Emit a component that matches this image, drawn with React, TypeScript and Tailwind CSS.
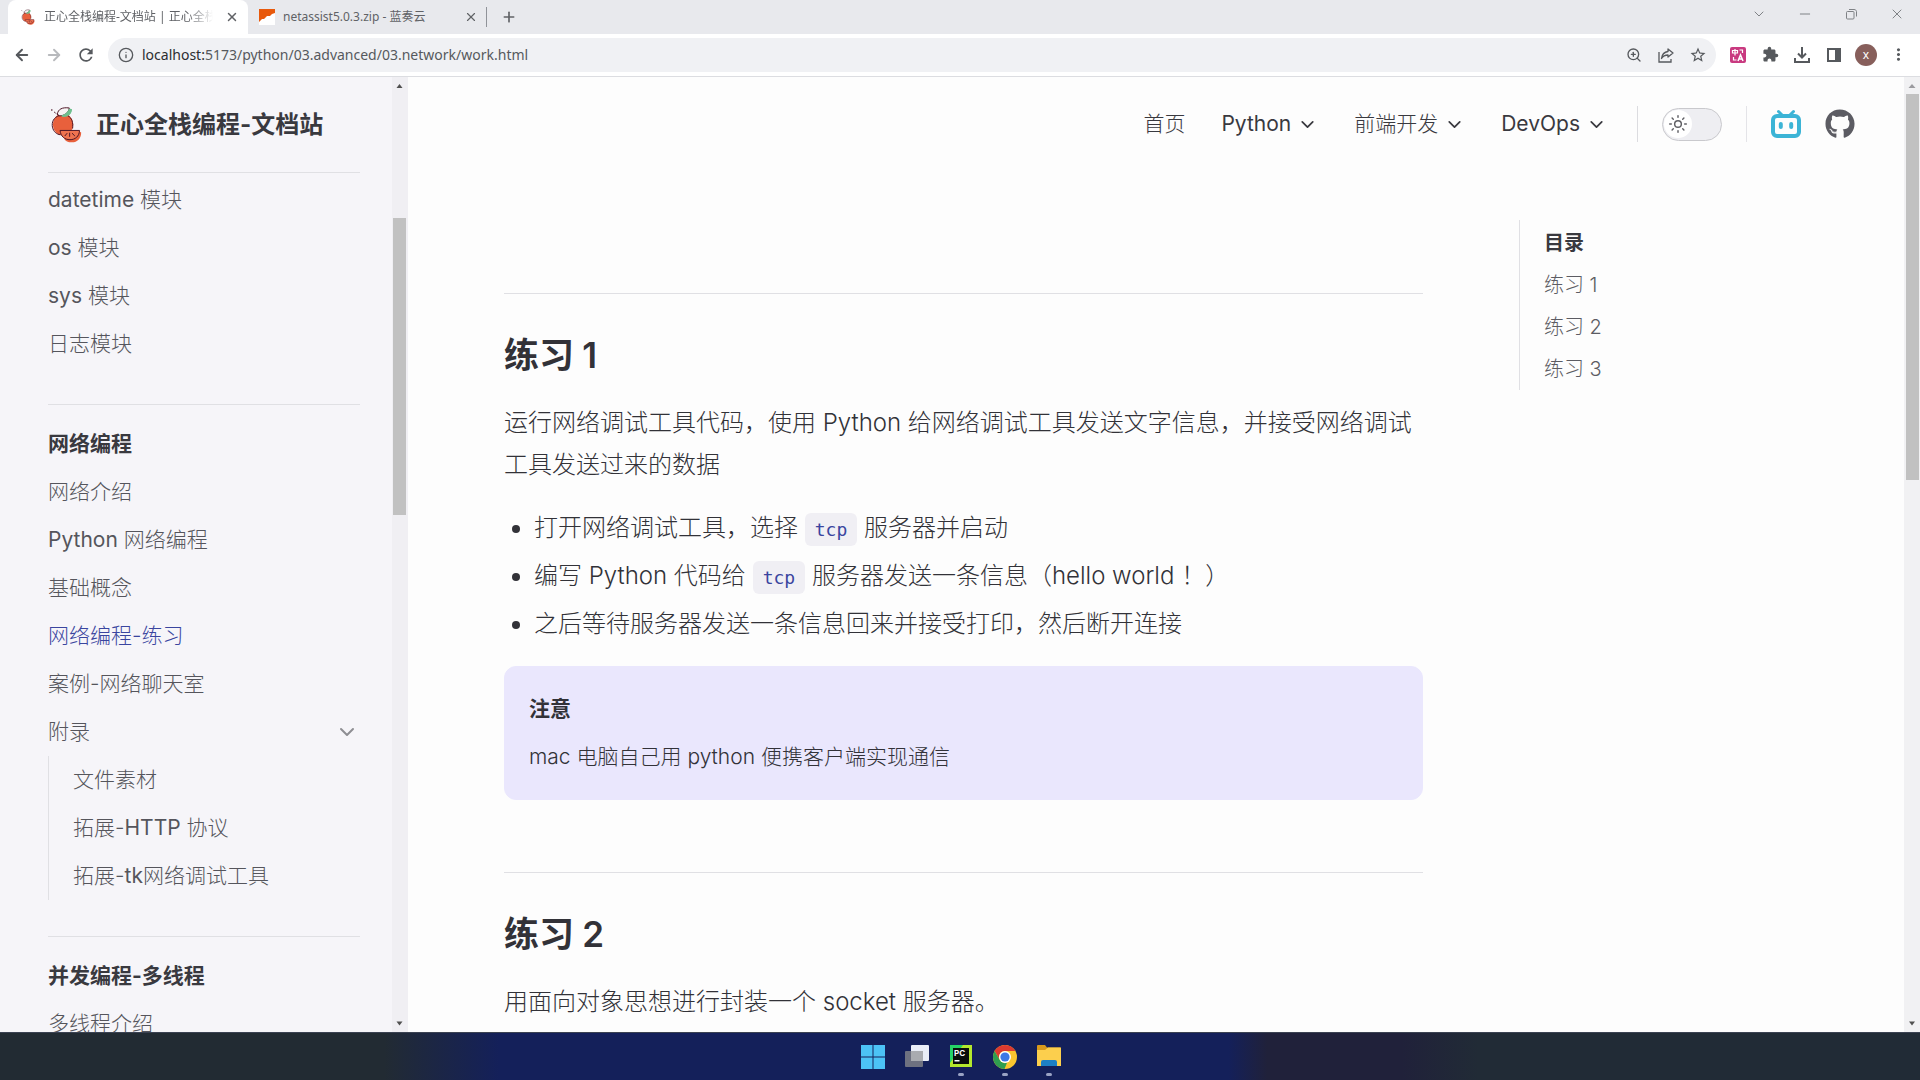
import { ReactNode } from "react";
import { ArrowLeft, ArrowRight, ChevronDown, Info, Minus, Plus, Sun, X, ZoomIn } from "lucide-react";
import { FaGithub } from "react-icons/fa";
import { MdExtension, MdMoreVert, MdRefresh, MdStarBorder } from "react-icons/md";

interface SidebarItem {
  label: string;
  active?: boolean;
  children?: string[];
}

interface SidebarGroup {
  title?: string;
  items: SidebarItem[];
}

const SIDEBAR: SidebarGroup[] = [
  {
    items: [{ label: "datetime 模块" }, { label: "os 模块" }, { label: "sys 模块" }, { label: "日志模块" }],
  },
  {
    title: "网络编程",
    items: [
      { label: "网络介绍" },
      { label: "Python 网络编程" },
      { label: "基础概念" },
      { label: "网络编程-练习", active: true },
      { label: "案例-网络聊天室" },
      { label: "附录", children: ["文件素材", "拓展-HTTP 协议", "拓展-tk网络调试工具"] },
    ],
  },
  {
    title: "并发编程-多线程",
    items: [{ label: "多线程介绍" }],
  },
];

const NAV = [
  { label: "首页", menu: false },
  { label: "Python", menu: true },
  { label: "前端开发", menu: true },
  { label: "DevOps", menu: true },
];

const OUTLINE = ["练习 1", "练习 2", "练习 3"];

// Latin runs get a heavier weight than the thin CJK glyphs around them
function Mixed({ text }: { text: string }) {
  return (
    <>
      {text.split(/([A-Za-z0-9]+)/).map((part, i) =>
        i % 2 ? (
          <span key={i} className="font-normal">
            {part}
          </span>
        ) : (
          part
        )
      )}
    </>
  );
}

function FruitLogo({ className }: { className: string }) {
  return (
    <svg viewBox="0 0 96 112" className={className} fill="none" aria-hidden="true">
      <ellipse cx="39" cy="56" rx="31" ry="33" fill="#e8603c" />
      <path d="M30 24C36 12 48 8 66 10C64 26 54 34 36 32Z" fill="#6fc08f" />
      <path d="M22 24C24 10 36 3 58 6C56 20 44 30 27 30Z" fill="#f7f3f4" stroke="#4d1626" strokeWidth="3" />
      <path d="M34 28C44 26 54 18 57 8C64 8 66 10 66 10C64 26 54 34 36 32Z" fill="#6fc08f" />
      <path d="M26 29L12 18" stroke="#4d1626" strokeWidth="3" strokeDasharray="8 4" />
      <circle cx="5" cy="12" r="2.5" fill="#4d1626" />
      <path d="M28 29C10 34 4 50 7 64C10 78 20 86 31 87M54 30C66 36 70 50 68 68" stroke="#4d1626" strokeWidth="3" />
      <path d="M94 80C94 98 82 110 66 110C54 110 46 106 42 98L90 78Z" fill="#e8603c" />
      <path d="M30 74H89C88 92 76 102 60 102C44 102 32 92 30 74Z" fill="#ef7350" stroke="#4d1626" strokeWidth="3" />
      <path d="M59 82V92M51 83L45 90M67 83L74 90" stroke="#4d1626" strokeWidth="3" strokeLinecap="round" />
    </svg>
  );
}

function BilibiliIcon() {
  return (
    <svg viewBox="0 0 30 30" className="size-[30px]" fill="none" stroke="#3cb4d6" strokeLinecap="round" aria-hidden="true">
      <path d="M7.5 2.5L11 6M22.5 2.5L19 6" strokeWidth="3" />
      <rect x="2" y="7" width="26" height="20" rx="4" strokeWidth="4" />
      <path d="M9.8 15V18M20.2 15V18" strokeWidth="4" />
    </svg>
  );
}

function ChromeIcon() {
  return (
    <svg viewBox="0 0 24 24" className="size-6" aria-hidden="true">
      <circle cx="12" cy="12" r="12" fill="#fbc62f" />
      <path d="M12 0A12 12 0 0 1 22.4 6H12A6 6 0 0 0 6.8 15L1.6 6A12 12 0 0 1 12 0Z" fill="#dc3a30" />
      <path d="M1.6 6L6.8 15A6 6 0 0 0 14 17.7L11.5 24A12 12 0 0 1 1.6 6Z" fill="#2f9e50" />
      <circle cx="12" cy="12" r="6" fill="#fff" />
      <circle cx="12" cy="12" r="4.6" fill="#3c78e6" />
    </svg>
  );
}

function TabStrip() {
  return (
    <div className="flex h-[34px] shrink-0 items-stretch bg-[#e8e9ed] pl-2 text-[#606266]">
      <div className="flex w-60 items-center rounded-t-lg bg-white pr-[9px] pl-3">
        <FruitLogo className="h-4 w-4 shrink-0" />
        <span className="ml-2 flex-1 overflow-hidden mask-r-from-85% text-xs leading-4 whitespace-nowrap">
          正心全栈编程-文档站 | 正心全栈
        </span>
        <button aria-label="关闭标签页" className="ml-3">
          <X className="size-3.5" strokeWidth={2.5} />
        </button>
      </div>
      <div className="flex w-[238px] items-center pr-[8px] pl-[11px]">
        <svg viewBox="0 0 16 16" className="size-4 shrink-0" aria-hidden="true">
          <rect width="16" height="16" fill="#fff" />
          <path d="M0 0H16V4L13 5L11 7L8 7L5 10L3 10L0 13Z" fill="#e8590c" />
        </svg>
        <span className="ml-2 flex-1 truncate text-xs leading-4">netassist5.0.3.zip - 蓝奏云</span>
        <button aria-label="关闭标签页">
          <X className="size-3.5" strokeWidth={2} />
        </button>
      </div>
      <span className="my-[7px] w-px bg-[#909399]" />
      <button aria-label="新标签页" className="ml-3.5">
        <Plus className="size-4" strokeWidth={2.5} />
      </button>
      <div className="ml-auto flex items-center gap-[30px] pr-[15px] pb-[6px] text-[#7f8286]">
        <button aria-label="搜索标签页">
          <ChevronDown className="size-4" strokeWidth={1.5} />
        </button>
        <button aria-label="最小化">
          <Minus className="size-4" strokeWidth={1.5} />
        </button>
        <button aria-label="还原">
          <svg viewBox="0 0 16 16" className="size-4" fill="none" stroke="currentColor" aria-hidden="true">
            <rect x="3.5" y="5.5" width="7.5" height="7.5" rx="1" />
            <path d="M6 3.5H11C12.5 3.5 13.5 4.5 13.5 5.5V10.5" />
          </svg>
        </button>
        <button aria-label="关闭">
          <X className="size-4" strokeWidth={1.5} />
        </button>
      </div>
    </div>
  );
}

function ToolButton({ label, children }: { label: string; children: ReactNode }) {
  return (
    <button aria-label={label} className="flex w-8 items-center justify-center">
      {children}
    </button>
  );
}

function Toolbar() {
  return (
    <div className="flex h-[43px] shrink-0 items-center border-b border-[#dcdde1] bg-white px-[6px] pb-px text-[#56595d]">
      <ToolButton label="后退">
        <ArrowLeft className="size-[18px]" strokeWidth={2.5} />
      </ToolButton>
      <ToolButton label="前进">
        <ArrowRight className="size-[18px] text-[#b8babd]" strokeWidth={2.5} />
      </ToolButton>
      <ToolButton label="刷新">
        <MdRefresh className="size-5" />
      </ToolButton>
      <div className="ml-[6px] flex h-[34px] flex-1 items-center rounded-full bg-[#f0f1f4] pr-[2px] pl-[10px] text-sm leading-5">
        <Info className="size-4 shrink-0" />
        <label htmlFor="url" className="ml-2 text-[#2b2d30]">
          localhost:
        </label>
        <input
          id="url"
          className="min-w-0 flex-1 bg-transparent outline-none"
          defaultValue="5173/python/03.advanced/03.network/work.html"
        />
        <ToolButton label="缩放">
          <ZoomIn className="size-4" />
        </ToolButton>
        <ToolButton label="分享">
          <svg viewBox="0 0 16 16" className="size-4" fill="none" stroke="currentColor" strokeWidth="1.3" aria-hidden="true">
            <path d="M1 5V15H13V12" />
            <path d="M10 2L15 6L10 10V8C7 8 5 9 3.500 11.500C4 7.500 6 5 10 4.500Z" strokeLinejoin="round" />
          </svg>
        </ToolButton>
        <ToolButton label="收藏">
          <MdStarBorder className="size-[18px]" />
        </ToolButton>
      </div>
      <div className="ml-[6px] flex items-center">
        <ToolButton label="翻译">
          <svg viewBox="0 0 16 16" className="size-4" aria-hidden="true">
            <rect width="16" height="16" rx="2" fill="#c93a80" />
            <path d="M2.500 3.500H7.500V6H2.500ZM5 2V8.500" fill="none" stroke="#fff" strokeWidth="1.200" />
            <path d="M9.500 3H12.500V6M3.500 10V13H6.500" fill="none" stroke="#fff" strokeWidth="1.200" />
            <path d="M8 14L10.500 8L13 14M9 12H12" fill="none" stroke="#fff" strokeWidth="1.500" />
          </svg>
        </ToolButton>
        <ToolButton label="扩展程序">
          <MdExtension className="size-[17px]" />
        </ToolButton>
        <ToolButton label="下载">
          <svg viewBox="0 0 16 16" className="size-4" fill="none" stroke="currentColor" strokeWidth="2" aria-hidden="true">
            <path d="M8 0V10M4 6.500L8 10.500L12 6.500M1 11V15H15V11" />
          </svg>
        </ToolButton>
        <ToolButton label="侧边栏">
          <svg viewBox="0 0 14 14" className="size-3.5" aria-hidden="true">
            <rect x="1" y="1" width="12" height="12" fill="none" stroke="currentColor" strokeWidth="2" />
            <rect x="8" y="1" width="5" height="12" fill="currentColor" />
          </svg>
        </ToolButton>
        <ToolButton label="用户">
          <span className="flex size-[22px] items-center justify-center rounded-full bg-[#875f5b] text-xs leading-4 text-white">
            x
          </span>
        </ToolButton>
        <ToolButton label="更多">
          <MdMoreVert className="size-[19px]" />
        </ToolButton>
      </div>
    </div>
  );
}

function Sidebar() {
  return (
    <aside className="flex w-[408px] shrink-0 bg-[#f6f5f9]">
      <div className="min-w-0 flex-1 pr-8 pl-12">
        <a href="#" className="flex h-24 items-center gap-[14px] border-b border-[#e0e0e4] pl-0.5">
          <FruitLogo className="h-[37px] w-8" />
          <span className="text-2xl leading-9 font-bold text-[#39393f]">正心全栈编程-文档站</span>
        </a>
        <nav className="pt-[3px] text-[21px] leading-9 font-light text-[#55555c]">
          {SIDEBAR.map((group, i) => (
            <section key={i} className={group.title ? "border-t border-[#e0e0e4] pt-[15px] pb-9" : "pb-9"}>
              {group.title && <h2 className="py-[6px] font-bold text-[#39393f]">{group.title}</h2>}
              {group.items.map((item) => (
                <div key={item.label}>
                  <a
                    href="#"
                    className={`flex items-center justify-between py-[6px] ${item.active ? "text-[#3a459f]" : ""}`}
                  >
                    <span>
                      <Mixed text={item.label} />
                    </span>
                    {item.children && <ChevronDown className="mr-px size-6 text-[#8e8e93]" />}
                  </a>
                  {item.children && (
                    <div className="border-l border-[#e0e0e4] pl-6">
                      {item.children.map((child) => (
                        <a key={child} href="#" className="block py-[6px]">
                          <Mixed text={child} />
                        </a>
                      ))}
                    </div>
                  )}
                </div>
              ))}
            </section>
          ))}
        </nav>
      </div>
      <div className="flex w-4 flex-col items-start bg-[#f0eff3] pl-px">
        <svg viewBox="0 0 15 17" className="h-[17px] w-[15px]" aria-hidden="true">
          <path d="M3.500 11L6.500 7L9.500 11Z" fill="#505050" />
        </svg>
        <div className="mt-[124px] h-[297px] w-[13px] bg-[#c1c1c1]" />
        <svg viewBox="0 0 15 17" className="mt-auto h-[17px] w-[15px]" aria-hidden="true">
          <path d="M3.500 6.500L6.500 10.500L9.500 6.500Z" fill="#505050" />
        </svg>
      </div>
    </aside>
  );
}

function Header() {
  return (
    <header className="flex h-[94px] items-center justify-end pr-[49px] text-[21px] leading-9 text-[#39393f]">
      <nav className="flex">
        {NAV.map((item) =>
          item.menu ? (
            <button key={item.label} className="flex items-center gap-[6px] px-[18px] font-light">
              <span>
                <Mixed text={item.label} />
              </span>
              <ChevronDown className="size-[21px]" />
            </button>
          ) : (
            <a key={item.label} href="#" className="px-[18px] font-light">
              {item.label}
            </a>
          )
        )}
      </nav>
      <span className="mr-6 ml-3 h-9 w-px bg-[#dcdce0]" />
      <button
        role="switch"
        aria-checked="false"
        aria-label="切换深色模式"
        className="flex h-[33px] w-[60px] items-center rounded-full border border-[#c9c9cd] bg-[#eeeef2] p-px"
      >
        <span className="flex size-7 items-center justify-center rounded-full bg-white text-[#606065]">
          <Sun className="size-5" strokeWidth={1.75} />
        </span>
      </button>
      <span className="mx-6 h-9 w-px bg-[#e4e4e8]" />
      <a href="#" aria-label="Bilibili">
        <BilibiliIcon />
      </a>
      <a href="#" aria-label="GitHub" className="ml-6 text-[#5c5c63]">
        <FaGithub className="size-[30px]" />
      </a>
    </header>
  );
}

function Code({ children }: { children: ReactNode }) {
  return (
    <code className="rounded-md bg-[#f0eff4] px-[10px] py-[6px] font-['DejaVu_Sans_Mono',monospace] text-lg leading-5 font-normal text-[#3a459f]">
      {children}
    </code>
  );
}

function SectionTitle({ children }: { children: ReactNode }) {
  return <h2 className="border-t border-[#e0e0e4] pt-9 text-[35px] leading-[50px] font-bold">{children}</h2>;
}

function Article() {
  return (
    <article className="min-w-0 flex-1 pt-[122px] text-2xl leading-[42px] font-light text-[#323238]">
      <SectionTitle>
        练习 <span className="font-semibold">1</span>
      </SectionTitle>
      <p className="mt-[22px]">
        运行网络调试工具代码，使用 Python 给网络调试工具发送文字信息，并接受网络调试工具发送过来的数据
      </p>
      <ul className="mt-[21px] list-disc space-y-[6px] pl-[30px]">
        <li>
          打开网络调试工具，选择 <Code>tcp</Code> 服务器并启动
        </li>
        <li>
          编写 Python 代码给 <Code>tcp</Code> 服务器发送一条信息（hello world ！）
        </li>
        <li>之后等待服务器发送一条信息回来并接受打印，然后断开连接</li>
      </ul>
      <div className="mt-[21px] rounded-xl border border-[#eae7fd] bg-[#eae7fd] p-6 text-[21px] leading-9">
        <p className="font-bold">注意</p>
        <p className="mt-3">mac 电脑自己用 python 便携客户端实现通信</p>
      </div>
      <div className="mt-[72px]">
        <SectionTitle>
          练习 <span className="font-semibold">2</span>
        </SectionTitle>
        <p className="mt-[22px]">用面向对象思想进行封装一个 socket 服务器。</p>
      </div>
    </article>
  );
}

function RunningMark() {
  return <span className="h-[3px] w-[6px] rounded-full bg-[#9aa3c4]" />;
}

function Taskbar() {
  return (
    <footer className="flex h-12 shrink-0 items-start justify-center gap-5 border-t border-[#3b4252] bg-[linear-gradient(to_right,#222b33_20%,#14205a_26%,#14205a_64%,#20213a_66%,#20213a_73%,#212b36_77%)] pt-3 pl-0.5">
      <button aria-label="开始">
        <svg viewBox="0 0 24 24" className="size-6" fill="#4cc2f5" aria-hidden="true">
          <path d="M0 0H11.500V11.500H0ZM12.500 0H24V11.500H12.500ZM0 12.500H11.500V24H0ZM12.500 12.500H24V24H12.500Z" />
        </svg>
      </button>
      <button aria-label="任务视图">
        <svg viewBox="0 0 24 24" className="size-6" aria-hidden="true">
          <rect x="6" y="0" width="18" height="16" rx="1" fill="#e9edf7" />
          <rect x="0" y="6" width="18" height="16" rx="1" fill="#7e8087" fillOpacity="0.85" />
          <rect x="6" y="6" width="12" height="10" fill="#a9abb0" />
        </svg>
      </button>
      <button aria-label="PyCharm" className="flex flex-col items-center gap-1">
        <svg viewBox="0 0 24 24" className="size-6" aria-hidden="true">
          <rect x="1" y="0" width="22" height="22" fill="#b4e82d" />
          <path d="M1 0H14L1 18Z" fill="#25d366" />
          <rect x="4" y="3" width="16" height="16" fill="#0a0f0c" />
          <text x="5" y="11" fontSize="8" fontWeight="700" fill="#fff">
            PC
          </text>
          <rect x="5.500" y="15" width="5" height="1.500" fill="#fff" />
        </svg>
        <RunningMark />
      </button>
      <button aria-label="Chrome" className="flex flex-col items-center gap-1">
        <ChromeIcon />
        <RunningMark />
      </button>
      <button aria-label="文件资源管理器" className="flex flex-col items-center gap-1">
        <svg viewBox="0 0 24 24" className="size-6" aria-hidden="true">
          <path d="M0 1Q0 0 1 0H8L10 2.500H24V20H0Z" fill="#d99a1c" />
          <path d="M0 5H8L11 2.500H23Q24 2.500 24 3.500V21H0Z" fill="#fccf4d" />
          <path d="M4 21V17Q4 15 6 15H18Q20 15 20 17V21Z" fill="#1d7fc4" />
        </svg>
        <RunningMark />
      </button>
    </footer>
  );
}

export default function App() {
  return (
    <div className="flex h-screen flex-col overflow-hidden bg-[#fdfdfd] font-['Inter','Noto_Sans_CJK_SC',sans-serif]">
      <div className="font-['Noto_Sans','Noto_Sans_CJK_SC',sans-serif]">
        <TabStrip />
        <Toolbar />
      </div>
      <div className="flex min-h-0 flex-1 overflow-hidden">
        <Sidebar />
        <main className="min-w-0 flex-1">
          <Header />
          <div className="flex pl-24">
            <Article />
            <aside className="ml-24 w-[385px] pt-[49px]">
              <div className="border-l border-[#e0e0e4] pt-0.5 pl-6 text-xl leading-[42px] text-[#5c5c63]">
                <h2 className="font-bold text-[#39393f]">目录</h2>
                {OUTLINE.map((item) => (
                  <a key={item} href="#" className="block leading-[42px] font-light">
                    {item}
                  </a>
                ))}
              </div>
            </aside>
          </div>
        </main>
        <div className="flex w-4 flex-col items-center bg-[#f1f1f3]">
          <svg viewBox="0 0 16 17" className="h-[17px] w-4" aria-hidden="true">
            <path d="M4.500 11L8 7L11.500 11Z" fill="#9b9b9f" />
          </svg>
          <div className="h-[386px] w-[13px] bg-[#c1c1c1]" />
          <svg viewBox="0 0 16 17" className="mt-auto h-[17px] w-4" aria-hidden="true">
            <path d="M5 6.500L8 10.500L11 6.500Z" fill="#505050" />
          </svg>
        </div>
      </div>
      <Taskbar />
    </div>
  );
}
